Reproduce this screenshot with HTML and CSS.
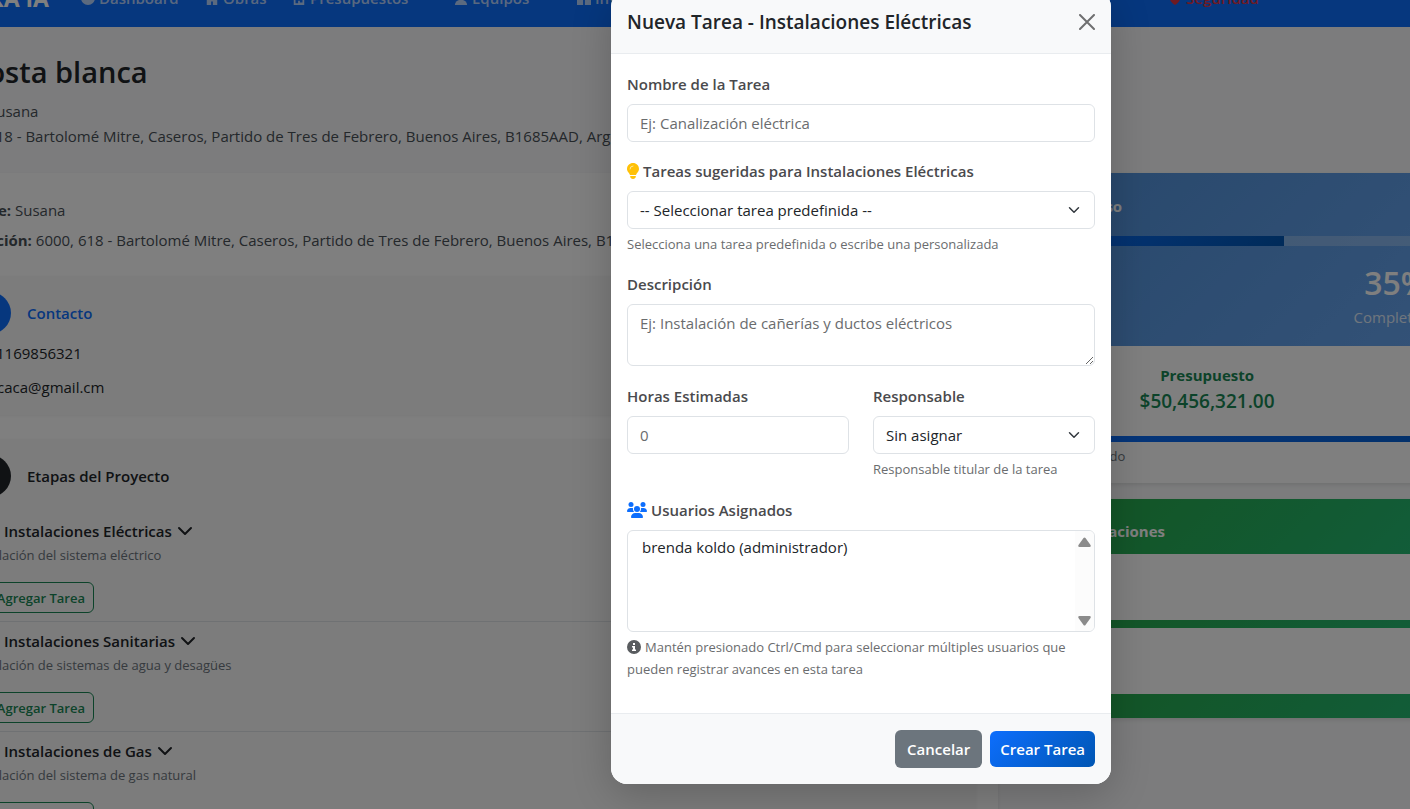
FILE: index.html
```html
<!DOCTYPE html>
<html lang="es">
<head>
<meta charset="utf-8">
<title>Costa blanca</title>
<link rel="stylesheet" href="styles.css">
</head>
<body>
<div class="viewport">
<div class="page">
  <nav class="navbar">
    <a class="brand" href="#">OBRA IA</a>
    <a class="nav-link nav-dashboard" href="#"><svg class="nav-icon" viewBox="0 0 16 16"><circle cx="8" cy="8" r="8"/></svg>Dashboard</a>
    <a class="nav-link nav-obras" href="#"><svg class="nav-icon" viewBox="0 0 16 16"><path d="M2 0h12v16H9v-4H7v4H2z"/></svg>Obras</a>
    <a class="nav-link nav-presupuestos" href="#"><svg class="nav-icon" viewBox="0 0 16 16"><path fill-rule="evenodd" d="M2 0h12v16H2zM4 2v12h3v-3h2v2h3V2z"/></svg>Presupuestos</a>
    <a class="nav-link nav-equipos" href="#"><svg class="nav-icon" viewBox="0 0 16 16"><circle cx="8" cy="4" r="4"/><path d="M1 16a7 6 0 0 1 14 0z"/></svg>Equipos</a>
    <a class="nav-link nav-inventario" href="#"><svg class="nav-icon" viewBox="0 0 16 16"><path d="M4 0h8v7H4zM0 9h7v7H0zM9 9h7v7H9z"/></svg>Inventario</a>
    <a class="nav-link nav-seguridad" href="#"><svg class="nav-icon" viewBox="0 0 16 16"><path d="M8 0l7 3c0 6-2 10-7 13C3 13 1 9 1 3z"/></svg>Seguridad</a>
  </nav>

  <header class="hero">
    <h1 class="hero-title">Costa blanca</h1>
    <p class="hero-client">Susana</p>
    <p class="hero-address">6000, 618 - Bartolomé Mitre, Caseros, Partido de Tres de Febrero, Buenos Aires, B1685AAD, Argentina</p>
  </header>

  <div class="columns">
    <main class="project">
      <div class="facts">
        <p class="fact"><strong>Cliente:</strong> Susana</p>
        <p class="fact"><strong>Ubicación:</strong> 6000, 618 - Bartolomé Mitre, Caseros, Partido de Tres de Febrero, Buenos Aires, B1685AAD, Argentina</p>
      </div>
      <section class="panel contact">
        <div class="panel-head">
          <span class="disc disc-blue"></span>
          <h2 class="panel-title title-blue">Contacto</h2>
        </div>
        <p class="contact-line phone">1169856321</p>
        <p class="contact-line mail">caca@gmail.cm</p>
      </section>
      <section class="panel stages">
        <div class="panel-head">
          <span class="disc disc-dark"></span>
          <h2 class="panel-title">Etapas del Proyecto</h2>
        </div>
        <article class="stage">
          <h3 class="stage-title">Instalaciones Eléctricas <svg class="chevron" viewBox="0 0 16 16"><path d="M2 5l6 6 6-6"/></svg></h3>
          <p class="stage-text">Instalación del sistema eléctrico</p>
          <button class="add-button" type="button">+ Agregar Tarea</button>
        </article>
        <article class="stage">
          <h3 class="stage-title">Instalaciones Sanitarias <svg class="chevron" viewBox="0 0 16 16"><path d="M2 5l6 6 6-6"/></svg></h3>
          <p class="stage-text">Instalación de sistemas de agua y desagües</p>
          <button class="add-button" type="button">+ Agregar Tarea</button>
        </article>
        <article class="stage">
          <h3 class="stage-title">Instalaciones de Gas <svg class="chevron" viewBox="0 0 16 16"><path d="M2 5l6 6 6-6"/></svg></h3>
          <p class="stage-text">Instalación del sistema de gas natural</p>
          <button class="add-button" type="button">+ Agregar Tarea</button>
        </article>
      </section>
    </main>

    <aside class="side">
      <section class="card">
        <div class="progress-head">
          <h2 class="card-title progress-title">Progreso</h2>
          <div class="track"><div class="fill" style="width:35%"></div></div>
          <p class="percent">35%</p>
          <p class="percent-label">Completado</p>
        </div>
        <div class="budget">
          <div class="budget-cell">
            <p class="budget-label">Presupuesto</p>
            <p class="budget-value">$50,456,321.00</p>
          </div>
        </div>
        <div class="budget-bar"></div>
        <p class="budget-note">Ejecutado</p>
      </section>
      <section class="card">
        <div class="cert-head"><h2 class="card-title cert-title">Certificaciones</h2></div>
        <div class="cert-space"></div>
        <div class="cert-bar"></div>
        <div class="cert-space"></div>
        <div class="cert-foot"></div>
      </section>
    </aside>
  </div>
</div>

<div class="backdrop">
  <div class="modal" role="dialog" aria-labelledby="modal-title">
    <div class="modal-header">
      <h2 class="modal-title" id="modal-title">Nueva Tarea - Instalaciones Eléctricas</h2>
      <button class="close-button" type="button" aria-label="Cerrar"><svg viewBox="0 0 16 16"><path d="M1 1l14 14M15 1L1 15"/></svg></button>
    </div>
    <form class="modal-body">
      <div class="field">
        <label class="label" for="nombre">Nombre de la Tarea</label>
        <input class="control" id="nombre" type="text" placeholder="Ej: Canalización eléctrica">
      </div>
      <div class="field">
        <label class="label" for="sugeridas"><svg class="icon-bulb" viewBox="0 0 12 16"><path d="M9 12c.3-1 .9-1.800 1.500-2.600C11.400 8.300 12 7.200 12 5.900 12 2.600 9.300 0 6 0S0 2.600 0 5.900c0 1.300.6 2.400 1.500 3.500C2.100 10.200 2.700 11 3 12zM3.200 13v.6C3.200 15 4.400 16 6 16s2.800-1 2.800-2.400V13z"/><path class="glint" d="M3 6a3 3 0 0 1 3-3"/></svg>Tareas sugeridas para Instalaciones Eléctricas</label>
        <select class="control select" id="sugeridas"><option>-- Seleccionar tarea predefinida --</option></select>
        <p class="help">Selecciona una tarea predefinida o escribe una personalizada</p>
      </div>
      <div class="field">
        <label class="label" for="descripcion">Descripción</label>
        <textarea class="control area" id="descripcion" rows="2" placeholder="Ej: Instalación de cañerías y ductos eléctricos"></textarea>
      </div>
      <div class="pair">
        <div class="field">
          <label class="label" for="horas">Horas Estimadas</label>
          <input class="control" id="horas" type="text" inputmode="numeric" placeholder="0">
        </div>
        <div class="field">
          <label class="label" for="responsable">Responsable</label>
          <select class="control select" id="responsable"><option>Sin asignar</option></select>
          <p class="help">Responsable titular de la tarea</p>
        </div>
      </div>
      <div class="field">
        <label class="label" for="usuarios"><svg class="icon-users" viewBox="0 0 20 16"><circle cx="4" cy="2.500" r="2.500"/><circle cx="16" cy="2.500" r="2.500"/><circle cx="10" cy="7" r="3"/><path d="M0 9.300C0 7.500 1.500 6 3.300 6h1.400c.5 0 1 .1 1.400.3C5.800 7.700 6.300 9 7.200 10H.7C.3 10 0 9.700 0 9.300zM20 9.300C20 7.500 18.500 6 16.700 6h-1.400c-.5 0-1 .1-1.400.3.3 1.400-.2 2.700-1.100 3.700h6.500c.4 0 .7-.3.700-.7zM4 15.200C4 12.900 5.900 11 8.200 11h3.600c2.300 0 4.200 1.900 4.200 4.200 0 .4-.4.8-.8.8H4.800c-.4 0-.8-.4-.8-.8z"/></svg>Usuarios Asignados</label>
        <div class="list-wrap">
          <select class="control list" id="usuarios" multiple size="4"><option>brenda koldo (administrador)</option></select>
          <span class="scrollbar" aria-hidden="true">
            <svg viewBox="0 0 13 10"><path d="M5.500 1q1-1 2 0l5 7q.8 2-1 2h-10q-1.800 0-1-2z"/></svg>
            <svg viewBox="0 0 13 10"><path d="M5.500 9q1 1 2 0l5-7q.8-2-1-2h-10q-1.800 0-1 2z"/></svg>
          </span>
        </div>
        <p class="help"><svg class="icon-info" viewBox="0 0 14 14"><circle cx="7" cy="7" r="7"/><path d="M6 3h2v2H6zM5 6h3v3.500h1V11H5V9.500h1v-2H5z"/></svg>Mantén presionado Ctrl/Cmd para seleccionar múltiples usuarios que pueden registrar avances en esta tarea</p>
      </div>
    </form>
    <div class="modal-footer">
      <button class="button button-gray" type="button">Cancelar</button>
      <button class="button button-blue" type="button">Crear Tarea</button>
    </div>
  </div>
</div>
</div>
</body>
</html>
```
FILE: styles.css
```css
* { box-sizing: border-box; }

body {
  margin: 0;
  background: #f8f9fa;
  color: #212529;
  font-family: "Open Sans", "Noto Sans", sans-serif;
  font-size: 15px;
  line-height: 26px;
}

h1, h2, h3, p { margin: 0; }
button, input, select, textarea { font: inherit; }

/* The wide page is seen scrolled a little down and to the right. */
.viewport {
  position: relative;
  height: 100vh;
  overflow: hidden;
}
.page { margin: -33px -361px 0 -60px; }

.navbar {
  display: flex;
  align-items: center;
  height: 60px;
  padding-top: 2px;
  background: #0d6efd;
}
.brand {
  width: 109px;
  color: #fff;
  font-size: 23px;
  font-weight: 700;
  text-align: right;
  text-decoration: none;
}
.nav-link {
  display: flex;
  align-items: center;
  gap: 4px;
  color: rgba(255, 255, 255, .7);
  font-weight: 600;
  text-decoration: none;
}
.nav-icon { width: 14px; height: 14px; fill: currentColor; }
.nav-dashboard { width: 124px; margin-left: 32px; }
.nav-obras { width: 87px; }
.nav-presupuestos { width: 162px; }
.nav-equipos { width: 123px; }
.nav-inventario { width: 591px; }
.nav-seguridad { color: #dc3545; }

.hero { height: 146px; padding-top: 22px; color: #495057; }
.hero-title {
  padding-left: 29px;
  color: #212529;
  font-size: 29px;
  font-weight: 600;
  line-height: 46px;
}
.hero-client { margin-top: 4px; padding-left: 48px; line-height: 25px; }
.hero-address { padding-left: 5px; line-height: 25px; }

.columns {
  display: grid;
  grid-template-columns: 24fr 17fr;
  gap: 24px;
}
.project {
  min-height: 660px;
  background: #fff;
  box-shadow: 0 2px 4px rgba(0, 0, 0, .08);
}
.facts { padding: 22px 14px 21px; color: #495057; }
.fact { padding: 2px 0; }
.fact strong { font-weight: 700; }
.panel {
  margin-right: 22px;
  padding: 16px 0 15px 29px;
  background: #f8f8f8;
  box-shadow: 0 1px 3px rgba(0, 0, 0, .06);
}
.panel-head { display: flex; align-items: center; gap: 16px; }
.disc { width: 42px; height: 42px; border-radius: 50%; }
.disc-blue { background: #0d6efd; }
.disc-dark { background: #212529; }
.panel-title { font-size: 15px; font-weight: 600; line-height: 26px; }
.title-blue { color: #0d6efd; }
.contact { height: 139px; }
.contact-line { padding-bottom: 8px; }
.phone { padding: 6px 0 8px 27px; }
.mail { padding-left: 28px; }
.stages { margin-top: 24px; }
.stage {
  padding: 6px 0 8px;
  border-bottom: 1px solid #dee2e6;
}
.panel-head + .stage { margin-top: 15px; }
.stage-title {
  display: flex;
  align-items: center;
  gap: 5px;
  padding-left: 35px;
  font-size: 15px;
  font-weight: 600;
  line-height: 26px;
}
.chevron { width: 16px; height: 16px; fill: none; stroke: currentColor; stroke-width: 2; stroke-linecap: round; stroke-linejoin: round; }
.stage-text { margin-bottom: 16px; color: #6c757d; font-size: 13px; line-height: 22px; }
.add-button {
  display: block;
  height: 31px;
  width: 125px;
  padding: 0 8px;
  border: 1px solid #198754;
  border-radius: 6px;
  background: none;
  color: #198754;
  font-size: 13px;
  font-weight: 600;
  text-align: right;
}

.side { display: flex; flex-direction: column; gap: 16px; }
.card { background: #fff; box-shadow: 0 2px 4px rgba(0, 0, 0, .1); }
.card-title { color: #fff; font-size: 15px; font-weight: 700; line-height: 26px; }
.progress-head {
  padding: 20px 0 16px;
  background: linear-gradient(135deg, #5090d8, #74b0fc);
  color: #fff;
  text-align: center;
}
.progress-title { padding-left: 34px; text-align: left; }
.track { height: 10px; margin: 17px 0 16px; background: rgba(255, 255, 255, .25); }
.fill { height: 100%; background: linear-gradient(135deg, #0d6efd, #0056b3); }
.percent { font-size: 32px; font-weight: 600; line-height: 42px; }
.percent-label { opacity: .8; }
.budget {
  display: grid;
  grid-template-columns: 1fr 1fr;
  gap: 8px;
  padding: 16px 0 22px;
  color: #198754;
  text-align: center;
}
.budget-label { font-weight: 700; }
.budget-value { font-size: 19px; font-weight: 600; }
.budget-bar { height: 6px; background: linear-gradient(135deg, #0d6efd, #0056b3); }
.budget-note { padding: 3px 0 16px 44px; color: #6c757d; font-size: 13px; line-height: 22px; }
.cert-head { padding: 19px 0 10px; background: linear-gradient(135deg, #28a745, #20c997); }
.cert-title { padding-left: 32px; }
.cert-space { height: 66px; }
.cert-bar { height: 8px; background: linear-gradient(135deg, #28a745, #20c997); }
.cert-foot { height: 24px; background: linear-gradient(135deg, #28a745, #20c997); }

.backdrop {
  position: absolute;
  inset: -9px -372px 0 -60px;
  display: flex;
  align-items: flex-start;
  justify-content: center;
  background: rgba(0, 0, 0, .5);
}
.modal {
  width: 500px;
  border-radius: 16px;
  overflow: hidden;
  background: #fff;
  box-shadow: 0 10px 40px rgba(0, 0, 0, .2);
}
.modal-header {
  display: flex;
  align-items: center;
  justify-content: space-between;
  padding: 16px;
  border-bottom: 1px solid #e9ecef;
  background: #f8f9fa;
}
.modal-title { font-size: 19px; font-weight: 600; line-height: 30px; }
.close-button {
  display: flex;
  padding: 0;
  border: 0;
  background: none;
  opacity: .55;
}
.close-button svg { width: 16px; height: 16px; fill: none; stroke: #000; stroke-width: 2; stroke-linecap: round; }
.modal-body { padding: 17px 16px; }
.field { margin-bottom: 16px; }
.label {
  display: flex;
  align-items: center;
  gap: 4px;
  margin-bottom: 7px;
  color: #4a4a4d;
  font-weight: 600;
}
.icon-bulb { width: 12px; height: 16px; fill: #ffc107; }
.glint { fill: none; stroke: #ffe69c; stroke-width: 1; stroke-linecap: round; }
.icon-users { width: 20px; height: 16px; fill: #0d6efd; }
.icon-info { width: 14px; height: 14px; margin-right: 4px; vertical-align: -2px; fill: #595c5f; }
.icon-info path { fill: #fff; }
.control {
  display: block;
  width: 100%;
  height: 38px;
  padding: 6px 12px;
  border: 1px solid #dee2e6;
  border-radius: 6px;
  background: #fff;
  color: #212529;
  line-height: 24px;
}
.control::placeholder { color: #6a6c6e; opacity: 1; }
.select {
  appearance: none;
  background: #fff url("data:image/svg+xml,%3Csvg xmlns='http://www.w3.org/2000/svg' viewBox='0 0 16 16'%3E%3Cpath fill='none' stroke='%23343a40' stroke-linecap='round' stroke-linejoin='round' stroke-width='2' d='m2 5 6 6 6-6'/%3E%3C/svg%3E") no-repeat right 14px center / 12px 12px;
}
.area { height: 62px; resize: vertical; }
.help { margin-top: 4px; color: #6a6c6e; font-size: 13px; line-height: 22px; }
.pair { display: grid; grid-template-columns: 1fr 1fr; gap: 24px; padding: 1px 0; }
.list-wrap { position: relative; }
.list { height: 102px; overflow: hidden; appearance: none; }
.list option { padding: 0 2px; }
.scrollbar {
  position: absolute;
  inset: 1px 1px 1px auto;
  display: flex;
  flex-direction: column;
  align-items: center;
  justify-content: space-between;
  width: 19px;
  padding: 6px 0 5px;
  border-radius: 0 5px 5px 0;
  background: #fcfcfc;
}
.scrollbar svg { width: 13px; height: 10px; fill: #8b8b8b; }
.modal-footer {
  display: flex;
  align-items: center;
  justify-content: flex-end;
  gap: 8px;
  padding: 16px;
  border-top: 1px solid #e9ecef;
  background: #f8f9fa;
}
.button { padding: 6px 10px; border: 0; border-radius: 6px; color: #fff; font-weight: 600; line-height: 24px; }
.button-gray { padding: 7px 12px; background: #6c757d; }
.button-blue { background: linear-gradient(135deg, #0d6efd, #0056b3); }
```
